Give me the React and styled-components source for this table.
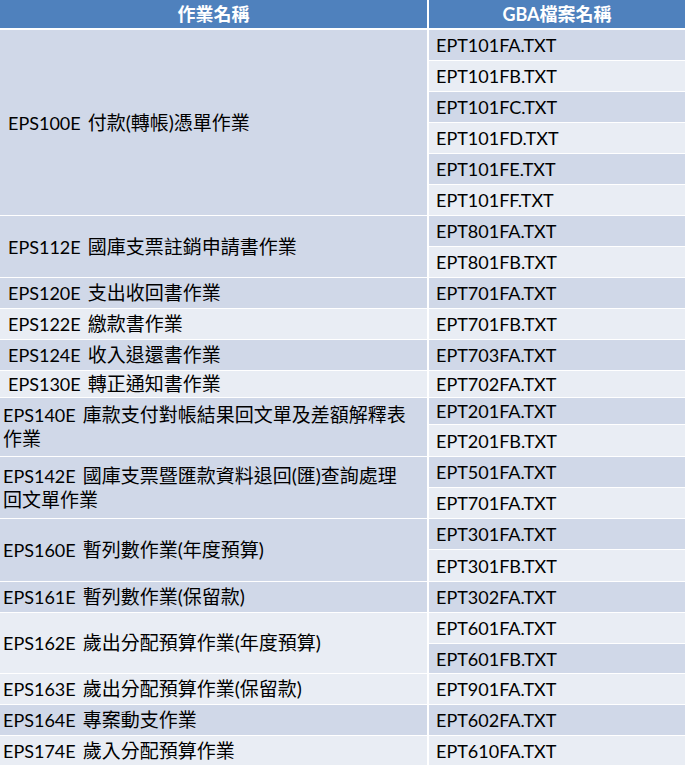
import React from "react";
import styled, { createGlobalStyle } from "styled-components";

const GlobalStyle = createGlobalStyle`
  html, body {
    margin: 0;
    padding: 0;
    background: #ffffff;
    overflow: hidden;
  }
  body {
    font-family: Lato, "Noto Sans CJK TC", sans-serif;
  }
`;

const Table = styled.div`
  display: grid;
  grid-template-columns: 427px 256px;
  column-gap: 2px;
  row-gap: 1px;
  width: 685px;
  background: #ffffff;
  color: #000000;
`;

const HeadCell = styled.div`
  height: 28px;
  margin-bottom: 1px;
  background: #4f81bd;
  color: #ffffff;
  font-size: 18px;
  font-weight: 700;
  display: flex;
  align-items: center;
  justify-content: center;
  padding-bottom: 2px;
  box-sizing: border-box;
`;

const TaskCell = styled.div`
  grid-column: 1;
  grid-row: span ${(p) => p.span};
  background: ${(p) => (p.tone === "dark" ? "#d0d8e8" : "#e9edf4")};
  display: flex;
  align-items: center;
  padding-left: ${(p) => p.inset}px;
  font-size: 18px;
  line-height: 24px;
`;

const FileCell = styled.div`
  grid-column: 2;
  height: ${(p) => p.h}px;
  background: ${(p) => (p.tone === "dark" ? "#d0d8e8" : "#e9edf4")};
  display: flex;
  align-items: center;
  padding-left: 7px;
  font-size: 18px;
`;

const Code = styled.span`
  margin-right: 7px;
`;

const Name = styled.span`
  font-size: 19px;
`;

const groups = [
  { code: "EPS100E", name: ["付款(轉帳)憑單作業"], tone: "dark", inset: 8,
    files: [["EPT101FA.TXT", 30], ["EPT101FB.TXT", 30], ["EPT101FC.TXT", 30], ["EPT101FD.TXT", 30], ["EPT101FE.TXT", 30], ["EPT101FF.TXT", 30]] },
  { code: "EPS112E", name: ["國庫支票註銷申請書作業"], tone: "dark", inset: 8,
    files: [["EPT801FA.TXT", 30], ["EPT801FB.TXT", 30]] },
  { code: "EPS120E", name: ["支出收回書作業"], tone: "dark", inset: 8, files: [["EPT701FA.TXT", 30]] },
  { code: "EPS122E", name: ["繳款書作業"], tone: "light", inset: 8, files: [["EPT701FB.TXT", 30]] },
  { code: "EPS124E", name: ["收入退還書作業"], tone: "dark", inset: 8, files: [["EPT703FA.TXT", 30]] },
  { code: "EPS130E", name: ["轉正通知書作業"], tone: "light", inset: 8, files: [["EPT702FA.TXT", 26]] },
  { code: "EPS140E", name: ["庫款支付對帳結果回文單及差額解釋表", "作業"], tone: "dark", inset: 3,
    files: [["EPT201FA.TXT", 26], ["EPT201FB.TXT", 31]] },
  { code: "EPS142E", name: ["國庫支票暨匯款資料退回(匯)查詢處理", "回文單作業"], tone: "dark", inset: 3,
    files: [["EPT501FA.TXT", 30], ["EPT701FA.TXT", 30]] },
  { code: "EPS160E", name: ["暫列數作業(年度預算)"], tone: "dark", inset: 3,
    files: [["EPT301FA.TXT", 30], ["EPT301FB.TXT", 31]] },
  { code: "EPS161E", name: ["暫列數作業(保留款)"], tone: "dark", inset: 3, files: [["EPT302FA.TXT", 30]] },
  { code: "EPS162E", name: ["歲出分配預算作業(年度預算)"], tone: "light", inset: 3,
    files: [["EPT601FA.TXT", 30], ["EPT601FB.TXT", 29]] },
  { code: "EPS163E", name: ["歲出分配預算作業(保留款)"], tone: "light", inset: 3, files: [["EPT901FA.TXT", 30]] },
  { code: "EPS164E", name: ["專案動支作業"], tone: "dark", inset: 3, files: [["EPT602FA.TXT", 30]] },
  { code: "EPS174E", name: ["歲入分配預算作業"], tone: "light", inset: 3, files: [["EPT610FA.TXT", 30]] },
];

export default function App() {
  let fileIndex = 0;
  return (
    <>
      <GlobalStyle />
      <Table>
        <HeadCell>作業名稱</HeadCell>
        <HeadCell>GBA檔案名稱</HeadCell>
        {groups.map((g) => (
          <React.Fragment key={g.code}>
            <TaskCell span={g.files.length} tone={g.tone} inset={g.inset}>
              <div>
                <Code>{g.code}</Code>
                {g.name.map((line, i) => (
                  <React.Fragment key={i}>
                    {i > 0 && <br />}
                    <Name>{line}</Name>
                  </React.Fragment>
                ))}
              </div>
            </TaskCell>
            {g.files.map(([file, h]) => {
              const tone = fileIndex++ % 2 === 0 ? "dark" : "light";
              return (
                <FileCell key={file + fileIndex} h={h} tone={tone}>
                  {file}
                </FileCell>
              );
            })}
          </React.Fragment>
        ))}
      </Table>
    </>
  );
}
